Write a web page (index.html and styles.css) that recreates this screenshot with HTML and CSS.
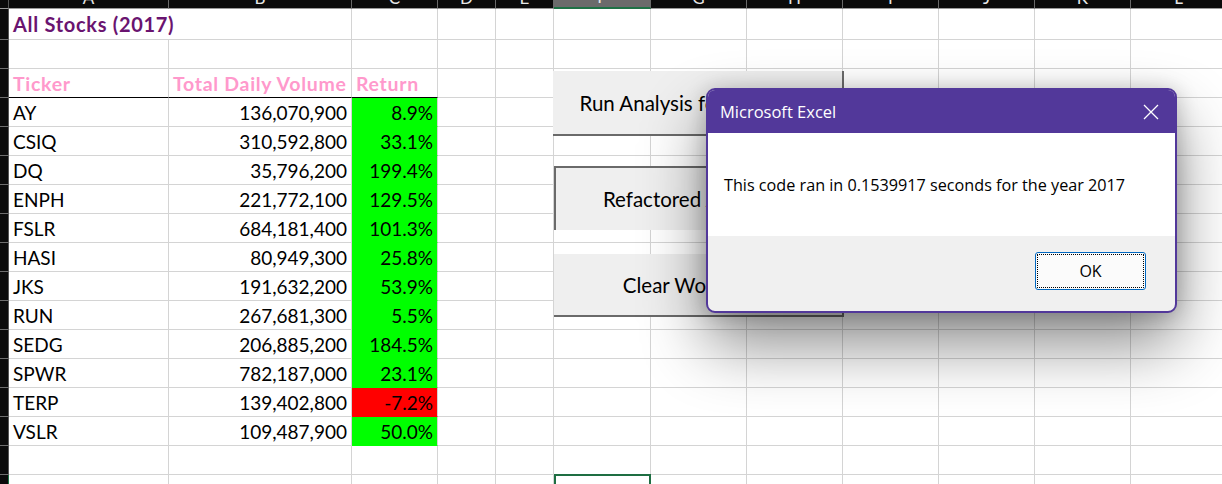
FILE: index.html
```html
<!DOCTYPE html>
<html>
<head>
<meta charset="utf-8">
<link rel="stylesheet" href="styles.css">
</head>
<body>
<div class="sheet">
  <div class="grid">
    <div class="row hdr">
      <div class="corner"></div>
      <div class="ch"><span>A</span></div><div class="ch"><span>B</span></div><div class="ch"><span>C</span></div><div class="ch"><span>D</span></div><div class="ch"><span>E</span></div><div class="ch sel"><span>F</span></div><div class="ch"><span>G</span></div><div class="ch"><span>H</span></div><div class="ch"><span>I</span></div><div class="ch"><span>J</span></div><div class="ch"><span>K</span></div><div class="ch"><span>L</span></div>
    </div>
    <div class="row r1">
      <div class="rh"></div>
      <div class="c title span2">All Stocks (2017)</div><div class="c"></div><div class="c"></div><div class="c"></div><div class="c"></div><div class="c"></div><div class="c"></div><div class="c"></div><div class="c"></div><div class="c"></div><div class="c"></div>
    </div>
    <div class="row">
      <div class="rh"></div>
      <div class="c"></div><div class="c"></div><div class="c"></div><div class="c"></div><div class="c"></div><div class="c"></div><div class="c"></div><div class="c"></div><div class="c"></div><div class="c"></div><div class="c"></div><div class="c"></div>
    </div>
    <div class="row">
      <div class="rh"></div>
      <div class="c th under">Ticker</div><div class="c th under">Total Daily Volume</div><div class="c th under">Return</div><div class="c"></div><div class="c"></div><div class="c"></div><div class="c"></div><div class="c"></div><div class="c"></div><div class="c"></div><div class="c"></div><div class="c"></div>
    </div>
    <div class="row">
      <div class="rh"></div>
      <div class="c">AY</div><div class="c num">136,070,900</div><div class="c num pos">8.9%</div><div class="c"></div><div class="c"></div><div class="c"></div><div class="c"></div><div class="c"></div><div class="c"></div><div class="c"></div><div class="c"></div><div class="c"></div>
    </div>
    <div class="row">
      <div class="rh"></div>
      <div class="c">CSIQ</div><div class="c num">310,592,800</div><div class="c num pos">33.1%</div><div class="c"></div><div class="c"></div><div class="c"></div><div class="c"></div><div class="c"></div><div class="c"></div><div class="c"></div><div class="c"></div><div class="c"></div>
    </div>
    <div class="row">
      <div class="rh"></div>
      <div class="c">DQ</div><div class="c num">35,796,200</div><div class="c num pos">199.4%</div><div class="c"></div><div class="c"></div><div class="c"></div><div class="c"></div><div class="c"></div><div class="c"></div><div class="c"></div><div class="c"></div><div class="c"></div>
    </div>
    <div class="row">
      <div class="rh"></div>
      <div class="c">ENPH</div><div class="c num">221,772,100</div><div class="c num pos">129.5%</div><div class="c"></div><div class="c"></div><div class="c"></div><div class="c"></div><div class="c"></div><div class="c"></div><div class="c"></div><div class="c"></div><div class="c"></div>
    </div>
    <div class="row">
      <div class="rh"></div>
      <div class="c">FSLR</div><div class="c num">684,181,400</div><div class="c num pos">101.3%</div><div class="c"></div><div class="c"></div><div class="c"></div><div class="c"></div><div class="c"></div><div class="c"></div><div class="c"></div><div class="c"></div><div class="c"></div>
    </div>
    <div class="row">
      <div class="rh"></div>
      <div class="c">HASI</div><div class="c num">80,949,300</div><div class="c num pos">25.8%</div><div class="c"></div><div class="c"></div><div class="c"></div><div class="c"></div><div class="c"></div><div class="c"></div><div class="c"></div><div class="c"></div><div class="c"></div>
    </div>
    <div class="row">
      <div class="rh"></div>
      <div class="c">JKS</div><div class="c num">191,632,200</div><div class="c num pos">53.9%</div><div class="c"></div><div class="c"></div><div class="c"></div><div class="c"></div><div class="c"></div><div class="c"></div><div class="c"></div><div class="c"></div><div class="c"></div>
    </div>
    <div class="row">
      <div class="rh"></div>
      <div class="c">RUN</div><div class="c num">267,681,300</div><div class="c num pos">5.5%</div><div class="c"></div><div class="c"></div><div class="c"></div><div class="c"></div><div class="c"></div><div class="c"></div><div class="c"></div><div class="c"></div><div class="c"></div>
    </div>
    <div class="row">
      <div class="rh"></div>
      <div class="c">SEDG</div><div class="c num">206,885,200</div><div class="c num pos">184.5%</div><div class="c"></div><div class="c"></div><div class="c"></div><div class="c"></div><div class="c"></div><div class="c"></div><div class="c"></div><div class="c"></div><div class="c"></div>
    </div>
    <div class="row">
      <div class="rh"></div>
      <div class="c">SPWR</div><div class="c num">782,187,000</div><div class="c num pos">23.1%</div><div class="c"></div><div class="c"></div><div class="c"></div><div class="c"></div><div class="c"></div><div class="c"></div><div class="c"></div><div class="c"></div><div class="c"></div>
    </div>
    <div class="row">
      <div class="rh"></div>
      <div class="c">TERP</div><div class="c num">139,402,800</div><div class="c num neg">-7.2%</div><div class="c"></div><div class="c"></div><div class="c"></div><div class="c"></div><div class="c"></div><div class="c"></div><div class="c"></div><div class="c"></div><div class="c"></div>
    </div>
    <div class="row">
      <div class="rh"></div>
      <div class="c">VSLR</div><div class="c num">109,487,900</div><div class="c num pos">50.0%</div><div class="c"></div><div class="c"></div><div class="c"></div><div class="c"></div><div class="c"></div><div class="c"></div><div class="c"></div><div class="c"></div><div class="c"></div>
    </div>
    <div class="row">
      <div class="rh"></div>
      <div class="c"></div><div class="c"></div><div class="c"></div><div class="c"></div><div class="c"></div><div class="c"></div><div class="c"></div><div class="c"></div><div class="c"></div><div class="c"></div><div class="c"></div><div class="c"></div>
    </div>
    <div class="row">
      <div class="rh rsel"></div>
      <div class="c"></div><div class="c"></div><div class="c"></div><div class="c"></div><div class="c"></div><div class="c active"></div><div class="c"></div><div class="c"></div><div class="c"></div><div class="c"></div><div class="c"></div><div class="c"></div>
    </div>
  </div>

  <div class="shape btn-run">Run Analysis for All Stocks</div>
  <div class="shape pressed btn-ref">Refactored Analysis</div>
  <div class="shape btn-clear">Clear Worksheet</div>

  <div class="dialog">
    <div class="titlebar">
      <span class="dtitle">Microsoft Excel</span>
      <svg class="close" width="16" height="16" viewBox="0 0 16 16"><path d="M1 1 L15 15 M15 1 L1 15" stroke="#ffffff" stroke-width="1.3" fill="none"/></svg>
    </div>
    <div class="dbody">This code ran in 0.1539917 seconds for the year 2017</div>
    <div class="dfoot"><div class="okbtn">OK</div></div>
  </div>
</div>
</body>
</html>
```

FILE: styles.css
```css
html, body {
  margin: 0;
  padding: 0;
  background: #ffffff;
  overflow: hidden;
}

.sheet {
  position: relative;
  width: 1222px;
  height: 484px;
  overflow: hidden;
  font-family: "Lato", "Liberation Sans", sans-serif;
}

.grid {
  display: flex;
  flex-direction: column;
}

.row {
  display: grid;
  grid-template-columns: 9px 160px 183px 86px 58px 58px 97px 96px 96px 96px 96px 96px 96px;
  height: 29px;
  flex: none;
}

.row.hdr { height: 9px; }
.row.r1 { height: 31px; }

.corner, .ch {
  background: #0b0b0b;
  box-sizing: border-box;
  border-bottom: 1px solid #9a9a9a;
}

.corner { border-right: 1px solid #555; }

.ch {
  border-right: 1px solid #6a6a6a;
  overflow: hidden;
  display: flex;
  justify-content: center;
  align-items: flex-end;
}

.ch span {
  color: #e6e6e6;
  font-size: 17px;
  line-height: 17px;
  margin-bottom: 2px;
}

.ch.sel {
  background: #6b6b6b;
  border-bottom: 2px solid #1e7145;
}

.rh {
  background: #0b0b0b;
  box-sizing: border-box;
  border-right: 1px solid #555;
  border-bottom: 1px solid #6e6e6e;
}

.rh.rsel { border-right: 1px solid #1e7145; }

.c {
  box-sizing: border-box;
  border-right: 1px solid #d4d4d4;
  border-bottom: 1px solid #d4d4d4;
  display: flex;
  align-items: flex-end;
  padding: 0 4px 2px 4px;
  font-size: 19px;
  color: #000;
  white-space: nowrap;
}

.c.span2 { grid-column: span 2; }

.c.title {
  font-weight: 700;
  font-size: 20px;
  letter-spacing: 0.7px;
  color: #6a1470;
  padding-bottom: 3px;
}

.c.th {
  font-weight: 700;
  font-size: 19.5px;
  letter-spacing: 0.7px;
  color: #ff99cc;
}

.c.under { border-bottom-color: #000; }

.c.num { justify-content: flex-end; }

.c.pos {
  background: #00ff00;
  border-bottom-color: #00ff00;
}

.c.neg {
  background: #ff0000;
  border-bottom-color: #ff0000;
}

.c.active {
  border: 2px solid #1e6e42;
  border-bottom: none;
  margin-top: -1px;
}

/* floating worksheet shapes */
.shape {
  position: absolute;
  box-sizing: border-box;
  background: #efefef;
  display: flex;
  align-items: center;
  justify-content: center;
  font-size: 20.5px;
  color: #000;
  white-space: nowrap;
}

.btn-run {
  left: 553px;
  top: 71px;
  width: 291px;
  height: 65px;
  border-right: 2px solid #6a6a6a;
  border-bottom: 2px solid #6a6a6a;
}

.btn-ref {
  left: 554px;
  top: 166px;
  width: 290px;
  height: 64px;
  border-top: 2px solid #6a6a6a;
  border-left: 2px solid #6a6a6a;
  padding-right: 18px;
}

.btn-clear {
  left: 554px;
  top: 254px;
  width: 290px;
  height: 63px;
  border-right: 2px solid #6a6a6a;
  border-bottom: 2px solid #6a6a6a;
}

/* message box */
.dialog {
  position: absolute;
  left: 706px;
  top: 88px;
  width: 471px;
  height: 225px;
  box-sizing: border-box;
  border: 2px solid #52389a;
  border-radius: 9px;
  background: #f0f0f0;
  overflow: hidden;
  display: flex;
  flex-direction: column;
  box-shadow: 0 32px 64px rgba(0, 0, 0, 0.45), 0 2px 21px rgba(0, 0, 0, 0.22);
  font-family: "Open Sans", "Noto Sans", sans-serif;
}

.titlebar {
  height: 43px;
  flex: none;
  background: #52389a;
  display: flex;
  align-items: center;
  justify-content: space-between;
  padding: 0 16px 0 12px;
}

.dtitle {
  color: #ffffff;
  font-size: 16.5px;
}

.close { display: block; }

.dbody {
  height: 103px;
  flex: none;
  background: #ffffff;
  display: flex;
  align-items: center;
  padding-left: 16px;
  font-size: 16.2px;
  color: #000;
}

.dfoot {
  flex: 1;
  display: flex;
  justify-content: flex-end;
  align-items: flex-start;
  padding: 16px 29px 0 0;
}

.okbtn {
  width: 111px;
  height: 38px;
  box-sizing: border-box;
  border: 1px solid #0067c0;
  border-radius: 3px;
  background: #fbfbfb;
  outline: 1px dotted #000;
  outline-offset: -3px;
  display: flex;
  align-items: center;
  justify-content: center;
  font-size: 16px;
  color: #000;
}
```
